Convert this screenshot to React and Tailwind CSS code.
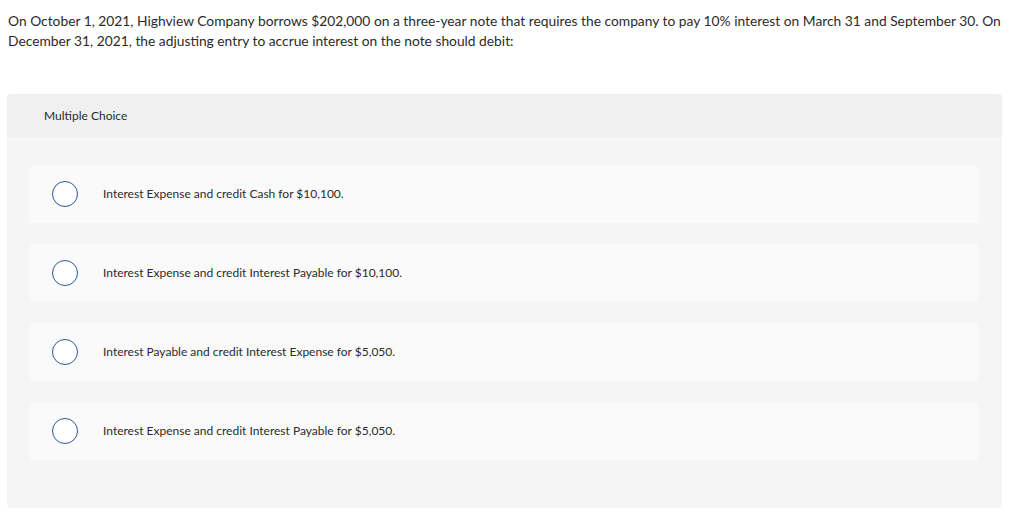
export default function App() {
  const options = [
    "Interest Expense and credit Cash for $10,100.",
    "Interest Expense and credit Interest Payable for $10,100.",
    "Interest Payable and credit Interest Expense for $5,050.",
    "Interest Expense and credit Interest Payable for $5,050.",
  ];

  return (
    <div className="min-h-screen bg-white text-[#2b2b2b] font-['Lato','Liberation_Sans',sans-serif]">
      <p className="px-2 pt-[11px] text-[13.8px] leading-[20px]">
        On October 1, 2021, Highview Company borrows $202,000 on a three-year note that requires the company to pay 10% interest on March 31 and September 30. On
        <br />
        December 31, 2021, the adjusting entry to accrue interest on the note should debit:
      </p>

      <div className="mx-[7px] mt-[43px] w-[995px] rounded-sm bg-[#f5f5f5]">
        <div className="flex h-[43px] items-center rounded-t-sm bg-[#f0f0f0] pl-[37px] text-[12px]">
          Multiple Choice
        </div>
        <div className="flex flex-col gap-[21px] pl-[23px] pr-6 pt-[28px] pb-[48px]">
          {options.map((option) => (
            <div
              key={option}
              className="flex h-[58px] w-[948px] items-center rounded-[4px] bg-[#fafafa]"
            >
              <span className="ml-[22px] h-[26px] w-[26px] shrink-0 rounded-full border border-[#2c5693] bg-white" />
              <span className="ml-[25px] text-[12px]">{option}</span>
            </div>
          ))}
        </div>
      </div>
    </div>
  );
}
